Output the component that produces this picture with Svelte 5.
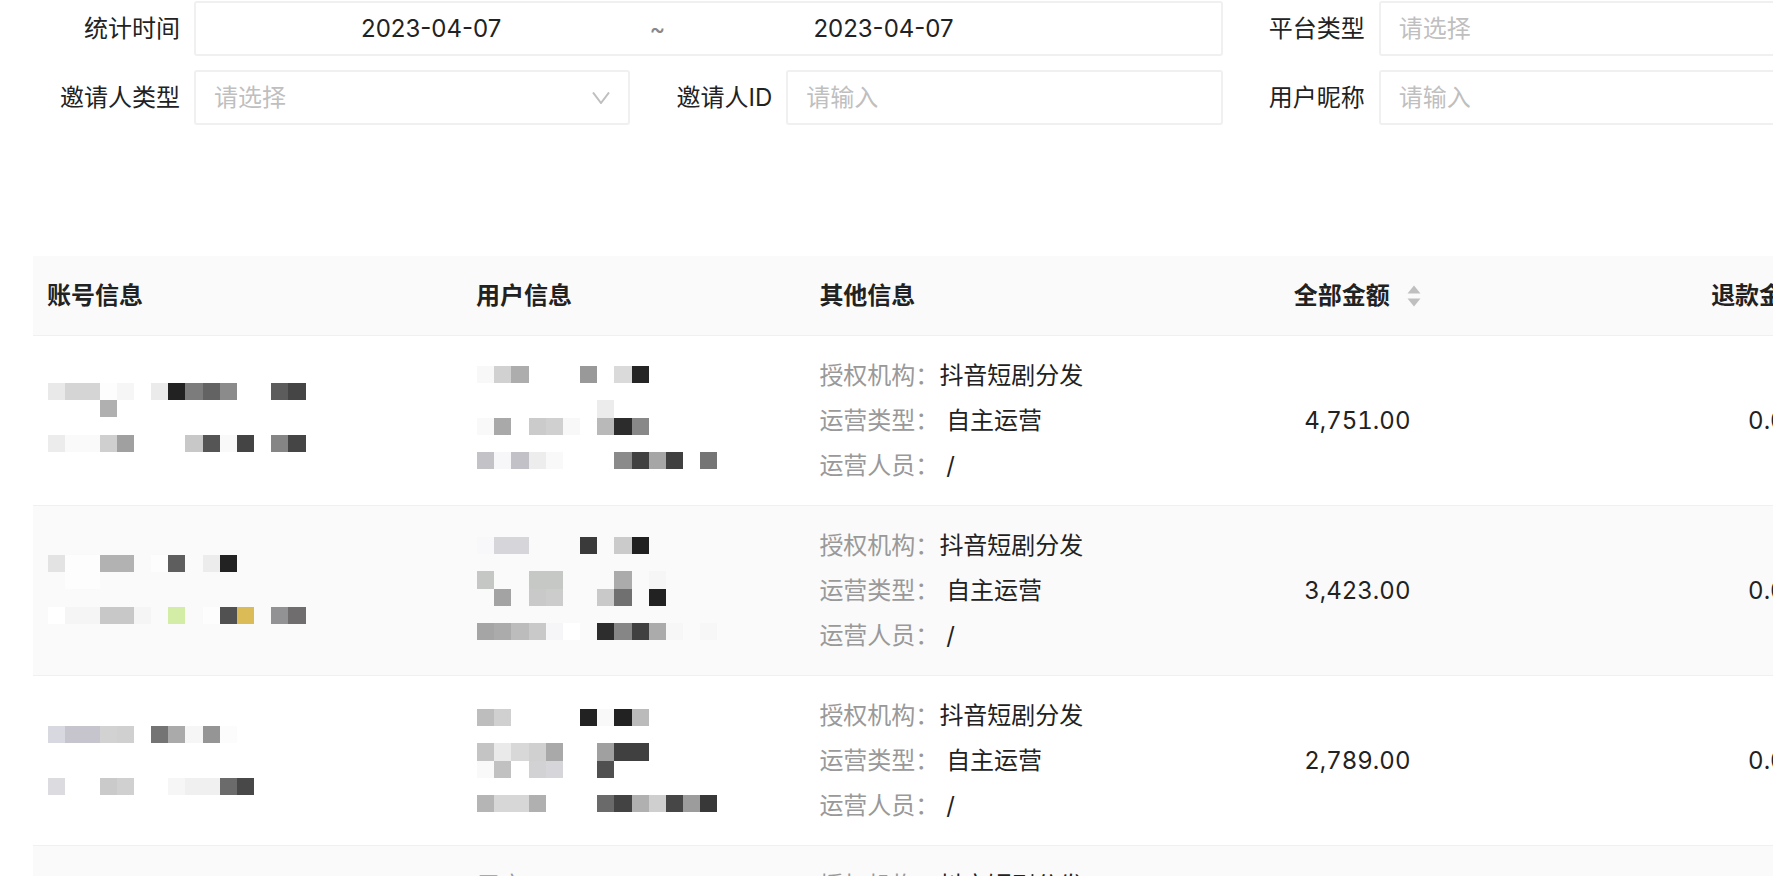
<script lang="ts">
    // size of one mosaic block
    const BLOCK = 17.17;

    type Mask = { top: number; lines: Record<number, string> };

    type Row = {
        account?: Mask;
        user?: Mask;
        userLabel?: string;
        total: string;
        refund: string;
    };

    // each line lists its blocks left to right: "-" is empty, two digits are a grey
    const rows: Row[] = [
        {
            account: {
                top: 30,
                lines: {
                    0: "e9 d5 d5 fd f6 - eb 22 7c 63 8b - - 5c 45",
                    1: "- - - b0",
                    3: "ec fa fa cf a0 - - - c8 55 f9 44 - 85 45",
                },
            },
            user: {
                top: 13,
                lines: {
                    0: "f8 d1 ad - - - 99 - da 25",
                    2: "- - - - - - - ec",
                    3: "f9 a9 - cb d0 f8 - b9 2c 88",
                    5: "c3c3c7 f7f7f9 c2c1c7 ed f9 - - - 8a 40 a6 40 - 75",
                },
            },
            total: "4,751.00",
            refund: "0.00",
        },
        {
            account: {
                top: 32,
                lines: {
                    0: "e3 fd fd b2 b2 - fd 5e - ec 22",
                    1: "- fd fd",
                    3: "ff f5 f5 c8 c8 f5f5f6 - d4eda6 - fd 51 dabb56 - 929294 706d6f",
                },
            },
            user: {
                top: 14,
                lines: {
                    0: "f8f8fb d5d5da d5d5da - - - 3a - cb 20",
                    2: "c5c7c5 - - c6c8c6 c6c8c6 - - - ab - f6",
                    3: "- a3 - c8c9c8 cc - - c9 70 - 22",
                    5: "a5 ab bc c9 f6f6f8 ff - 2d 86 40 ab f7 - f7",
                },
            },
            total: "3,423.00",
            refund: "0.00",
        },
        {
            account: {
                top: 33,
                lines: {
                    0: "d8d8e0 c6c5cd c6c5cd d2 d0 - 74 aa f6 95 fc",
                    3: "dcdce0 - - ca d0 - - f6 f0 f0 6b 48",
                },
            },
            user: {
                top: 16,
                lines: {
                    0: "bd d0 - - - - 22 f9 22 bb",
                    2: "c4 ea d8 d0 a9 - - a0 40 40",
                    3: "f9 c1 - d2d2d4 d6d6da - - 50",
                    5: "b5 d7 d7 b0 - - - 6a 43 b0 cf 46 9c 38",
                },
            },
            total: "2,789.00",
            refund: "0.00",
        },
        { userLabel: "用户", total: "", refund: "" },
    ];

    function blocks(mask: Mask) {
        return Object.entries(mask.lines).flatMap(([line, colors]) =>
            colors.split(" ").flatMap((c, i) =>
                c === "-"
                    ? []
                    : [
                          {
                              x: 1 + i * BLOCK,
                              y: mask.top + Number(line) * BLOCK,
                              fill: "#" + (c.length === 2 ? c + c + c : c),
                          },
                      ],
            ),
        );
    }
</script>

{#snippet arrow()}
    <svg class="arrow" viewBox="0 0 18 12" aria-hidden="true">
        <path d="M1 0.5 L9 11 L17 0.5" />
    </svg>
{/snippet}

{#snippet mosaic(mask: Mask)}
    <svg class="mosaic" viewBox="0 0 260 135" shape-rendering="crispEdges" aria-hidden="true">
        {#each blocks(mask) as b}
            <rect x={b.x} y={b.y} width={BLOCK} height={BLOCK} fill={b.fill} />
        {/each}
    </svg>
{/snippet}

{#snippet sortable(title: string)}
    <button class="sort" type="button">
        {title}
        <svg viewBox="0 0 14 22" aria-hidden="true">
            <path d="M7 0.5 L13.5 8.5 H0.5 Z M0.5 13.5 H13.5 L7 21.5 Z" />
        </svg>
    </button>
{/snippet}

<main class="page">
    <form class="filters">
        <label for="date-start">统计时间</label>
        <div class="range">
            <input id="date-start" type="text" value="2023-04-07" />
            <span>~</span>
            <input type="text" value="2023-04-07" aria-label="结束时间" />
        </div>
        <label for="platform">平台类型</label>
        <div class="select">
            <select id="platform"><option>请选择</option></select>
            {@render arrow()}
        </div>

        <label for="inviter-type">邀请人类型</label>
        <div class="select">
            <select id="inviter-type"><option>请选择</option></select>
            {@render arrow()}
        </div>
        <label for="inviter-id">邀请人ID</label>
        <input id="inviter-id" class="field" type="text" placeholder="请输入" />
        <label for="nickname">用户昵称</label>
        <input id="nickname" class="field" type="text" placeholder="请输入" />
    </form>

    <table>
        <colgroup>
            <col class="col-account" />
            <col class="col-user" />
            <col class="col-other" />
            <col class="col-amount" />
            <col class="col-amount" />
        </colgroup>
        <thead>
            <tr>
                <th>账号信息</th>
                <th>用户信息</th>
                <th>其他信息</th>
                <th class="amount">{@render sortable("全部金额")}</th>
                <th class="amount">{@render sortable("退款金额")}</th>
            </tr>
        </thead>
        <tbody>
            {#each rows as row}
                <tr>
                    <td>
                        {#if row.account}{@render mosaic(row.account)}{/if}
                    </td>
                    <td class="user">
                        {#if row.user}{@render mosaic(row.user)}{/if}
                        {#if row.userLabel}<span class="muted">{row.userLabel}</span>{/if}
                    </td>
                    <td>
                        <div><span class="muted">授权机构：</span>抖音短剧分发</div>
                        <div><span class="muted">运营类型：</span>&nbsp;自主运营</div>
                        <div><span class="muted">运营人员：</span>&nbsp;/</div>
                    </td>
                    <td class="amount">{row.total}</td>
                    <td class="amount">{row.refund}</td>
                </tr>
            {/each}
        </tbody>
    </table>
</main>

<style>
    :global(body) {
        background: #fff;
    }

    .page {
        height: 100vh;
        overflow: hidden;
        font-family: Inter, "Noto Sans CJK SC", sans-serif;
        font-size: 24px;
        line-height: 45px;
        color: #222;
    }

    .filters {
        display: grid;
        grid-template-columns: 194px 1fr 156px 1fr 156px 1fr;
        grid-auto-rows: 55px;
        row-gap: 14px;
        align-items: stretch;
        width: calc(100% + 42px);
        min-width: 1400px;
        padding-top: 1px;
    }

    label {
        padding-right: 14px;
        line-height: 55px;
        text-align: right;
        white-space: nowrap;
    }

    input,
    select,
    button {
        font: inherit;
        color: inherit;
        min-width: 0;
        margin: 0;
        border: 0;
        outline: 0;
        background: none;
    }

    .range,
    .field,
    .select {
        box-sizing: border-box;
        border: 2px solid #f0f0f0;
        border-radius: 3px;
    }

    .range {
        grid-column: span 3;
        display: flex;
        align-items: center;
        padding: 0 119px 0 17px;
    }

    .range input {
        flex: 1;
        padding: 0;
        text-align: center;
    }

    .range span {
        width: 16px;
        text-align: center;
        color: #888;
    }

    .field {
        padding: 0 18px;
    }

    .field::placeholder {
        color: #bfbfbf;
        opacity: 1;
    }

    .select {
        display: grid;
        align-items: center;
    }

    .select select {
        grid-area: 1 / 1;
        height: 51px;
        padding: 0 18px;
        appearance: none;
        color: #bfbfbf;
    }

    .arrow {
        grid-area: 1 / 1;
        justify-self: end;
        width: 18px;
        height: 12px;
        margin-right: 18px;
        fill: none;
        stroke: #bfbfbf;
        stroke-width: 2;
        pointer-events: none;
    }

    table {
        width: 110%;
        min-width: 1950px;
        margin: 131px 0 0 33px;
        border-collapse: separate;
        border-spacing: 0;
        table-layout: fixed;
    }

    .col-account {
        width: 22%;
    }

    .col-user,
    .col-other {
        width: 343px;
    }

    .col-amount {
        width: 417px;
    }

    th,
    td {
        padding: 17px 14px;
        border-bottom: 1px solid #f0f0f0;
        text-align: left;
        white-space: nowrap;
    }

    th {
        background: #fafafa;
        font-weight: 600;
    }

    td.user {
        vertical-align: top;
    }

    tbody tr:nth-child(even) {
        background: #fafafa;
    }

    .amount {
        text-align: center;
        font-variant-numeric: tabular-nums;
    }

    .sort {
        display: inline-flex;
        align-items: center;
        gap: 17px;
        padding: 0;
        font-weight: 600;
    }

    .sort svg {
        width: 14px;
        height: 22px;
        fill: #bfbfbf;
    }

    .mosaic {
        display: block;
        width: 260px;
        height: 135px;
    }

    .muted {
        color: #999;
    }
</style>
